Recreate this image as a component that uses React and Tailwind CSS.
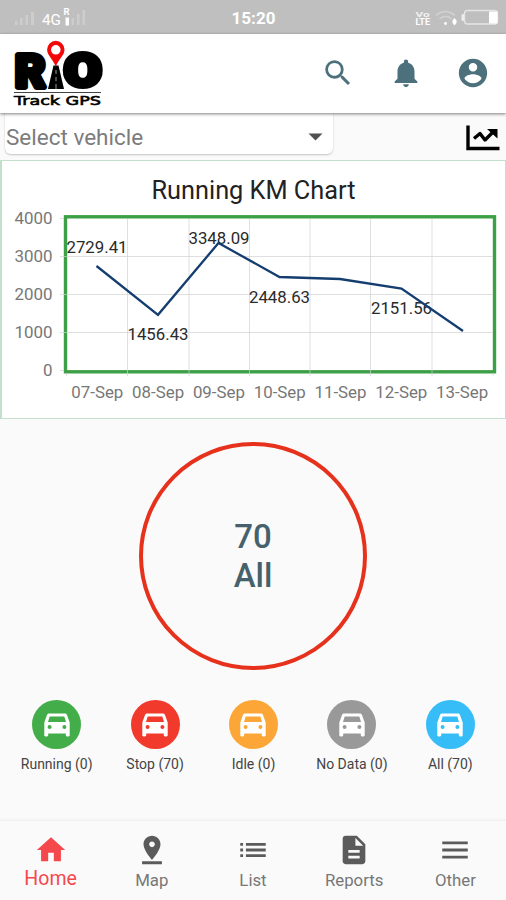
import React from "react";

const PATHS = {
  search:
    "M15.5 14h-.79l-.28-.27A6.471 6.471 0 0 0 16 9.5 6.5 6.5 0 1 0 9.5 16c1.61 0 3.09-.59 4.23-1.57l.27.28v.79l5 4.99L20.49 19l-4.99-5zm-6 0C7.01 14 5 11.99 5 9.5S7.01 5 9.5 5 14 7.01 14 9.5 11.99 14 9.5 14z",
  bell:
    "M12 22c1.1 0 2-.9 2-2h-4c0 1.1.89 2 2 2zm6-6v-5c0-3.07-1.64-5.64-4.5-6.32V4c0-.83-.67-1.5-1.5-1.5s-1.5.67-1.5 1.5v.68C7.63 5.36 6 7.92 6 11v5l-2 2v1h16v-1l-2-2z",
  account:
    "M12 2C6.48 2 2 6.48 2 12s4.48 10 10 10 10-4.48 10-10S17.52 2 12 2zm0 3c1.66 0 3 1.34 3 3s-1.34 3-3 3-3-1.34-3-3 1.34-3 3-3zm0 14.2c-2.5 0-4.71-1.28-6-3.22.03-1.99 4-3.08 6-3.08 1.99 0 5.97 1.09 6 3.08-1.29 1.94-3.5 3.22-6 3.22z",
  home: "M10 20v-6h4v6h5v-8h3L12 3 2 12h3v8z",
  map:
    "M18 8c0-3.31-2.69-6-6-6S6 4.69 6 8c0 4.5 6 11 6 11s6-6.5 6-11zm-8 0c0-1.1.9-2 2-2s2 .9 2 2-.89 2-2 2c-1.1 0-2-.9-2-2zM5 20v2h14v-2H5z",
  list:
    "M3 13h2v-2H3v2zm0 4h2v-2H3v2zm0-8h2V7H3v2zm4 4h14v-2H7v2zm0 4h14v-2H7v2zM7 7v2h14V7H7z",
  report:
    "M14 2H6c-1.1 0-1.99.9-1.99 2L4 20c0 1.1.89 2 1.99 2H18c1.1 0 2-.9 2-2V8l-6-6zm2 16H8v-2h8v2zm0-4H8v-2h8v2zm-3-5V3.5L18.5 9H13z",
  menu: "M3 18h18v-2H3v2zm0-5h18v-2H3v2zm0-7v2h18V6H3z",
};

function Icon({ name, className }) {
  return (
    <svg viewBox="0 0 24 24" className={className} fill="currentColor">
      <path d={PATHS[name]} />
    </svg>
  );
}

function Car() {
  return (
    <svg width="26" height="24" viewBox="0 0 26 24" fill="#fff">
      <path
        fillRule="evenodd"
        d="M5.300.5h15.400c1.300 0 2.100.6 2.400 1.700L25.700 9.500v12.800c0 .7-.5 1.200-1.200 1.200H23c-.7 0-1.200-.5-1.200-1.200V20.500H4.200v1.800c0 .7-.5 1.200-1.200 1.200H1.500c-.7 0-1.200-.5-1.200-1.200V9.500L2.900 2.200C3.200 1.100 4 .5 5.300.5zM5.700 3.500L4 8.900h18l-1.700-5.400zM5.600 12a2 2 0 1 0 0 4 2 2 0 0 0 0-4zM20.400 12a2 2 0 1 0 0 4 2 2 0 0 0 0-4z"
      />
    </svg>
  );
}

function StatusBar() {
  return (
    <div className="flex h-[34px] shrink-0 items-center bg-[#bfbfbf] text-white">
      <svg width="190" height="34" fill="#fff">
        <g opacity="0.22">
          <rect x="15" y="21" width="2.500" height="4" />
          <rect x="20" y="18" width="2.500" height="7" />
          <rect x="25.500" y="15" width="2.500" height="10" />
          <rect x="31" y="12" width="3" height="13" />
          <rect x="71.500" y="18" width="2.500" height="7" />
          <rect x="77" y="14" width="2.500" height="11" />
          <rect x="82.500" y="10" width="2.500" height="15" />
        </g>
        <text x="42" y="25" fontSize="15.500" textLength="19" lengthAdjust="spacingAndGlyphs">4G</text>
        <text x="63.500" y="15" fontSize="9.500" fontWeight="700">R</text>
        <rect x="65.500" y="17.500" width="3.500" height="8" />
      </svg>
      <span className="w-[127px] pt-[3px] text-center text-[17px] font-bold leading-none">15:20</span>
      <svg width="189" height="34" className="ml-auto" fill="#fff">
        <text x="98.500" y="16.500" fontSize="8" fontWeight="700" textLength="14" lengthAdjust="spacingAndGlyphs" opacity="0.8">Vo</text>
        <text x="98.500" y="25" fontSize="8.500" fontWeight="700" textLength="14.500" lengthAdjust="spacingAndGlyphs">LTE</text>
        <g fill="none" stroke="#fff" strokeWidth="1.500" opacity="0.3">
          <path d="M119 15.500Q128.500 7.500 138 15.500M122.500 19Q128.500 13.500 134.500 19" />
        </g>
        <circle cx="128.500" cy="23.500" r="1.400" />
        <path d="M137.500 18l2 2.500v2.500l-2 2.500-2-2.500v-2.500z" />
        <rect x="147.500" y="10.500" width="33" height="13.500" rx="3" fill="none" stroke="#fff" strokeWidth="1.300" opacity="0.6" />
        <rect x="144.500" y="14" width="2.500" height="7" rx="1" opacity="0.7" />
        <rect x="172" y="11.500" width="8.500" height="12" rx="1" />
      </svg>
    </div>
  );
}

function Logo() {
  return (
    <svg width="110" height="79" viewBox="0 34 110 79">
      <g fontFamily="Roboto, sans-serif" fontWeight="700" stroke="#000" strokeLinejoin="round">
        <text x="15" y="86.500" fontSize="44.500" strokeWidth="6" textLength="30" lengthAdjust="spacingAndGlyphs">R</text>
        <text x="64.200" y="86.200" fontSize="43.500" strokeWidth="6" textLength="37" lengthAdjust="spacingAndGlyphs">O</text>
      </g>
      <path d="M53.500 65.500h5L64 89H48z" stroke="#fff" strokeWidth="1" paintOrder="stroke" />
      <path d="M56 70v4M56 77v4M56 84v5" stroke="#999" strokeWidth="1" />
      <path
        fillRule="evenodd"
        fill="#f20808"
        d="M55.800 40.800a8.700 8.700 0 0 0-8.700 8.800c0 6 6 9.400 8.700 17.400 2.700-8 8.700-11.400 8.700-17.400a8.700 8.700 0 0 0-8.700-8.800zm0 4.200a4.800 4.800 0 1 1 0 9.600 4.800 4.800 0 0 1 0-9.600z"
      />
      <path d="M14 92.500H101" stroke="#444" strokeWidth="1" />
      <text
        x="14"
        y="104.800"
        fontSize="13"
        fontFamily="'DejaVu Sans', sans-serif"
        stroke="#000"
        strokeWidth="0.600"
        textLength="87"
        lengthAdjust="spacingAndGlyphs"
      >
        Track GPS
      </text>
    </svg>
  );
}

function Header() {
  return (
    <header className="relative flex h-[79px] shrink-0 items-center bg-white pb-px pr-4 shadow-[0_1px_3px_rgba(0,0,0,0.5)]">
      <Logo />
      <div className="ml-auto flex gap-[33.5px] text-[#4c717c]">
        <Icon name="search" className="size-[34px]" />
        <Icon name="bell" className="size-[34px]" />
        <Icon name="account" className="size-[34px]" />
      </div>
    </header>
  );
}

function VehicleRow() {
  return (
    <div className="flex h-[47px] shrink-0 items-start justify-between pl-[5px] pr-[6px]">
      <div className="flex h-[41px] w-[328px] items-center justify-between rounded-b-md bg-white pl-px pr-[10px] pt-[7px] shadow-[0_1px_2px_rgba(0,0,0,0.22)]">
        <span className="text-[22.5px] leading-none text-[#7c7c7c]">Select vehicle</span>
        <svg width="15" height="8" viewBox="0 0 15 8" fill="#505050">
          <path d="M.5.500h14L7.500 7.500z" />
        </svg>
      </div>
      <svg width="34" height="47" viewBox="466 113 34 47" fill="none" stroke="#000">
        <path d="M468 125.500v23h31.500" strokeWidth="3.400" />
        <path d="M474 138.500l6-5 5 6.500 9-9" strokeWidth="3.400" strokeLinejoin="round" />
        <path d="M487 129h10.500v9.500z" fill="#000" stroke="none" />
      </svg>
    </div>
  );
}

const GRID_X = [66.5, 127.5, 189, 249.5, 310, 370.5, 432, 493];
const DAYS = ["07-Sep", "08-Sep", "09-Sep", "10-Sep", "11-Sep", "12-Sep", "13-Sep"];
const TICKS = [
  [4000, 218],
  [3000, 256],
  [2000, 294],
  [1000, 332],
  [0, 370],
];
const VALUES = [
  ["2729.41", 97, 252.5],
  ["1456.43", 158, 340],
  ["3348.09", 219, 243.5],
  ["2448.63", 279.5, 302.5],
  ["2151.56", 401.5, 314],
];

function ChartPanel() {
  return (
    <section className="h-[259px] shrink-0 border border-l-2 border-[#c5dfcd] bg-white">
      <svg width="503" height="257" viewBox="2 161 503 257">
        <text x="253.500" y="199" textAnchor="middle" fontSize="26" textLength="204" lengthAdjust="spacingAndGlyphs" fill="#222">
          Running KM Chart
        </text>
        <rect x="65.500" y="216.800" width="429" height="155" fill="none" stroke="#3d9f46" strokeWidth="3.400" />
        <g stroke="#d2d2d2" strokeOpacity="0.7">
          {GRID_X.map((x, i) => (
            <path key={x} d={i === 0 || i === 7 ? `M${x} 373V376` : `M${x} 219V376`} />
          ))}
          {TICKS.map(([v, y]) => (
            <path key={v} d={v === 0 || v === 4000 ? `M60 ${y + 0.5}H64` : `M60 ${y + 0.5}H493`} />
          ))}
        </g>
        <g fill="#777" fontSize="16.500">
          {TICKS.map(([v, y]) => (
            <text
              key={v}
              x="52.500"
              y={y + 6}
              textAnchor="end"
              textLength={v === 0 ? 9.5 : 38}
              lengthAdjust="spacingAndGlyphs"
            >
              {v}
            </text>
          ))}
          {DAYS.map((d, i) => (
            <text key={d} x={97.3 + i * 60.8} y="397.500" textAnchor="middle" textLength="52" lengthAdjust="spacingAndGlyphs">
              {d}
            </text>
          ))}
        </g>
        <g fill="#2a2a2a" fontSize="16">
          {VALUES.map(([v, x, y]) => (
            <text key={v} x={x} y={y} textAnchor="middle" textLength="61" lengthAdjust="spacingAndGlyphs">{v}</text>
          ))}
        </g>
        <path
          d="M96.500 266L158 314.800 218.500 243 279.500 277 340 279 401.500 288.500 463 331"
          fill="none"
          stroke="#143d70"
          strokeWidth="2.300"
        />
      </svg>
    </section>
  );
}

const STATUSES = [
  { label: "Running (0)", color: "bg-[#43ad49]" },
  { label: "Stop (70)", color: "bg-[#f13a2c]" },
  { label: "Idle (0)", color: "bg-[#fba636]" },
  { label: "No Data (0)", color: "bg-[#999999]" },
  { label: "All (70)", color: "bg-[#36bdf8]" },
];

function StatusSummary() {
  return (
    <main className="flex flex-1 flex-col items-center pt-[23px]">
      <div className="flex size-[228px] flex-col items-center justify-center rounded-full border-4 border-[#e6321c] text-center text-[33px] font-medium leading-[39px] text-[#46616c]">
        <span>70</span>
        <span>All</span>
      </div>
      <div className="mt-[30px] grid w-full grid-cols-5 pl-[7.5px] pr-[6.5px]">
        {STATUSES.map((s) => (
          <div key={s.label} className="flex flex-col items-center">
            <div className={`flex size-[49px] items-center justify-center rounded-full ${s.color}`}>
              <Car />
            </div>
            <span className="mt-[7px] whitespace-nowrap text-[14px] leading-4 text-[#444]">{s.label}</span>
          </div>
        ))}
      </div>
    </main>
  );
}

const TABS = [
  { label: "Home", icon: "home", active: true },
  { label: "Map", icon: "map" },
  { label: "List", icon: "list" },
  { label: "Reports", icon: "report" },
  { label: "Other", icon: "menu" },
];

function BottomNav() {
  return (
    <nav className="grid h-[80px] shrink-0 grid-cols-5 border-t border-[#f0f0f0] bg-[#fafafa] shadow-[0_-1px_2px_rgba(0,0,0,0.03)]">
      {TABS.map((t) => (
        <div key={t.label} className={`flex flex-col items-center pt-3 ${t.active ? "text-[#f5484d]" : "text-[#5b5b5b]"}`}>
          <Icon name={t.icon} className="size-[34px]" />
          <span
            className={
              t.active
                ? "mt-[1px] text-[19.5px] leading-[22px]"
                : "mt-[2px] text-[16.8px] leading-[22px] text-[#777]"
            }
          >
            {t.label}
          </span>
        </div>
      ))}
    </nav>
  );
}

export default function App() {
  return (
    <div className="flex h-[900px] w-[506px] flex-col overflow-hidden bg-[#fafafa] font-[Roboto,sans-serif]">
      <StatusBar />
      <Header />
      <VehicleRow />
      <ChartPanel />
      <StatusSummary />
      <BottomNav />
    </div>
  );
}
